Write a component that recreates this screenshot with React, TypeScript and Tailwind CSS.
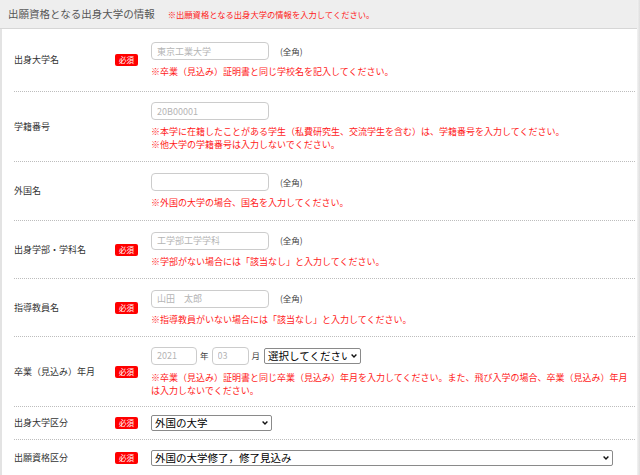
import React from "react";

const Badge = () => (
  <span className="inline-flex items-center justify-center w-[23px] h-[12px] bg-[#ff0000] text-white text-[7.5px] leading-none rounded-[2px]">
    必須
  </span>
);

type RowProps = {
  label: string;
  required?: boolean;
  h: string;
  children: React.ReactNode;
  last?: boolean;
};

const Row = ({ label, required, h, children, last }: RowProps) => (
  <div
    className={
      "flex items-center ml-[12px] mr-[2px] " +
      h +
      (last ? "" : " border-b border-dotted border-[#bdbdbd]")
    }
  >
    <div className="w-[101px] shrink-0 text-[9px] text-[#333]">{label}</div>
    <div className="w-[36px] shrink-0 flex items-center">{required ? <Badge /> : null}</div>
    <div className="flex-1 flex flex-col">{children}</div>
  </div>
);

const TextInput = ({ placeholder, w = "w-[118px]" }: { placeholder?: string; w?: string }) => (
  <input
    placeholder={placeholder}
    className={
      w +
      " h-[18px] border border-[#cccccc] rounded-[4px] px-[5px] text-[9px] text-[#333] bg-white placeholder:text-[#b5b5b5] outline-none"
    }
  />
);

const Zenkaku = () => <span className="ml-[11px] text-[8.5px] text-[#444]">(全角)</span>;

const Note = ({ children }: { children: React.ReactNode }) => (
  <div className="text-[9px] leading-[13px] text-[#ff1a1a]">{children}</div>
);

const Select = ({ w, value, options }: { w: string; value: string; options: string[] }) => (
  <div className={"relative flex " + w}>
    <select
      defaultValue={value}
      className="block appearance-none w-full h-[16px] border border-[#8a8a8a] rounded-[2px] bg-white pl-[3px] pr-[12px] py-0 text-[10.5px] leading-[14px] text-black outline-none"
    >
      {options.map((o) => (
        <option key={o}>{o}</option>
      ))}
    </select>
    <svg
      className="absolute right-[4px] top-[6px] pointer-events-none"
      width="6"
      height="4"
      viewBox="0 0 6 4"
    >
      <path d="M0.6 0.6 L3 3 L5.4 0.6" fill="none" stroke="#111" strokeWidth="1.4" />
    </svg>
  </div>
);

export default function App() {
  return (
    <div
      className="w-[640px] h-[475px] overflow-hidden bg-white flex"
      style={{ fontFamily: '"Noto Sans CJK JP", "Noto Sans", sans-serif' }}
    >
      <div className="flex-1 flex flex-col">
        <div className="h-[29px] shrink-0 bg-[#eeeeee] border-b border-[#d6d6d6] flex items-center pl-[8px]">
          <span className="text-[10.5px] text-[#555]">出願資格となる出身大学の情報</span>
          <span className="ml-[13px] text-[8.3px] text-[#ff1a1a]">
            ※出願資格となる出身大学の情報を入力してください。
          </span>
        </div>
        <div className="flex-1 border-l-2 border-[#e3e3e3] flex flex-col">
          <Row label="出身大学名" required h="h-[63px]">
            <div className="flex items-center">
              <TextInput placeholder="東京工業大学" />
              <Zenkaku />
            </div>
            <div className="mt-[5px]">
              <Note>※卒業（見込み）証明書と同じ学校名を記入してください。</Note>
            </div>
          </Row>
          <Row label="学籍番号" h="h-[70px]">
            <div className="flex items-center">
              <TextInput placeholder="20B00001" />
            </div>
            <div className="mt-[5px]">
              <Note>※本学に在籍したことがある学生（私費研究生、交流学生を含む）は、学籍番号を入力してください。</Note>
              <Note>※他大学の学籍番号は入力しないでください。</Note>
            </div>
          </Row>
          <Row label="外国名" h="h-[59px]">
            <div className="flex items-center">
              <TextInput />
              <Zenkaku />
            </div>
            <div className="mt-[5px]">
              <Note>※外国の大学の場合、国名を入力してください。</Note>
            </div>
          </Row>
          <Row label="出身学部・学科名" required h="h-[58px]">
            <div className="flex items-center">
              <TextInput placeholder="工学部工学学科" />
              <Zenkaku />
            </div>
            <div className="mt-[5px]">
              <Note>※学部がない場合には「該当なし」と入力してください。</Note>
            </div>
          </Row>
          <Row label="指導教員名" required h="h-[58px]">
            <div className="flex items-center">
              <TextInput placeholder="山田　太郎" />
              <Zenkaku />
            </div>
            <div className="mt-[5px]">
              <Note>※指導教員がいない場合には「該当なし」と入力してください。</Note>
            </div>
          </Row>
          <Row label="卒業（見込み）年月" required h="h-[70px]">
            <div className="flex items-center">
              <TextInput placeholder="2021" w="w-[46px]" />
              <span className="mx-[3px] text-[8.5px] text-[#444]">年</span>
              <TextInput placeholder="03" w="w-[37px]" />
              <span className="ml-[3px] mr-[4px] text-[8.5px] text-[#444]">月</span>
              <Select w="w-[97px]" value="選択してください" options={["選択してください", "3月", "9月"]} />
            </div>
            <div className="mt-[6px]">
              <Note>
                ※卒業（見込み）証明書と同じ卒業（見込み）年月を入力してください。また、飛び入学の場合、卒業（見込み）年月
              </Note>
              <Note>は入力しないでください。</Note>
            </div>
          </Row>
          <Row label="出身大学区分" required h="h-[33px]">
            <div className="flex items-center">
              <Select w="w-[121px]" value="外国の大学" options={["外国の大学", "日本の大学"]} />
            </div>
          </Row>
          <Row label="出願資格区分" required h="h-[36px]" last>
            <div className="flex items-center">
              <Select
                w="w-[462px]"
                value="外国の大学修了，修了見込み"
                options={["外国の大学修了，修了見込み", "日本の大学卒業"]}
              />
            </div>
          </Row>
        </div>
      </div>
      <div className="w-[3px] shrink-0 bg-gradient-to-r from-[#f3f3f3] to-[#dedede]" />
    </div>
  );
}
